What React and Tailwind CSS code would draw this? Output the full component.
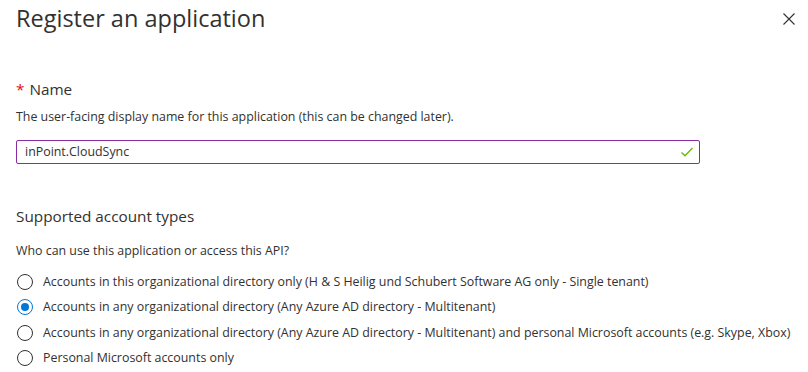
import React, { useState } from 'react';

const options = [
  'Accounts in this organizational directory only (H & S Heilig und Schubert Software AG only - Single tenant)',
  'Accounts in any organizational directory (Any Azure AD directory - Multitenant)',
  'Accounts in any organizational directory (Any Azure AD directory - Multitenant) and personal Microsoft accounts (e.g. Skype, Xbox)',
  'Personal Microsoft accounts only',
];

const Radio = ({ checked }) => (
  <span
    className={`flex h-4 w-4 shrink-0 items-center justify-center rounded-full border ${checked ? 'border-[#0078d4]' : 'border-[#323130]'}`}
  >
    {checked && <span className="h-2 w-2 rounded-full bg-[#0078d4]" />}
  </span>
);

const App = () => {
  const [name, setName] = useState('inPoint.CloudSync');
  const [selected, setSelected] = useState(1);

  return (
    <div
      className="h-[372px] w-[808px] overflow-hidden bg-white text-[#323130]"
      style={{ fontFamily: '"Segoe UI", "Open Sans", sans-serif' }}
    >
      <div className="flex items-start justify-between pl-4 pr-[13px] pt-[1px]">
        <h1 className="whitespace-nowrap text-[23.5px] leading-[34px] font-normal">Register an application</h1>
        <button className="mt-[12px]">
          <svg width="12" height="12" viewBox="0 0 12 12">
            <path d="M0.5 0.5 L11.5 11.5 M11.5 0.5 L0.5 11.5" stroke="#323130" strokeWidth="1.1" />
          </svg>
        </button>
      </div>

      <div className="px-4">
        <div className="mt-[43px] flex items-center text-[15.3px] leading-[22px]">
          <span className="mr-[5px] text-[#e00b1c]">*</span>
          <span>Name</span>
        </div>
        <p className="mt-[8px] whitespace-nowrap text-[12.4px] leading-[18px]">
          The user-facing display name for this application (this can be changed later).
        </p>

        <div className="mt-[14px] flex h-[24px] w-[684px] items-center rounded-[2px] border border-[#8a2da5] pl-[8px] pr-[6px]">
          <input
            value={name}
            onChange={(e) => setName(e.target.value)}
            className="flex-1 bg-transparent text-[12.4px] text-[#323130] outline-none"
          />
          <svg width="12" height="10" viewBox="0 0 12 10">
            <path d="M0.5 5.5 L4 8.8 L11.5 1" fill="none" stroke="#6bb700" strokeWidth="1.3" />
          </svg>
        </div>

        <h2 className="mt-[41px] text-[15.3px] leading-[22px] font-normal">Supported account types</h2>
        <p className="mt-[15px] whitespace-nowrap text-[12.4px] leading-[18px]">Who can use this application or access this API?</p>

        <div className="mt-[13px] flex flex-col gap-[7.3px]">
          {options.map((label, i) => (
            <label
              key={i}
              onClick={() => setSelected(i)}
              className="flex h-[18px] cursor-pointer items-center gap-[10px] pl-[1px] text-[12.4px] leading-[18px] whitespace-nowrap"
            >
              <Radio checked={selected === i} />
              <span>{label}</span>
            </label>
          ))}
        </div>
      </div>
    </div>
  );
};

export default App;
